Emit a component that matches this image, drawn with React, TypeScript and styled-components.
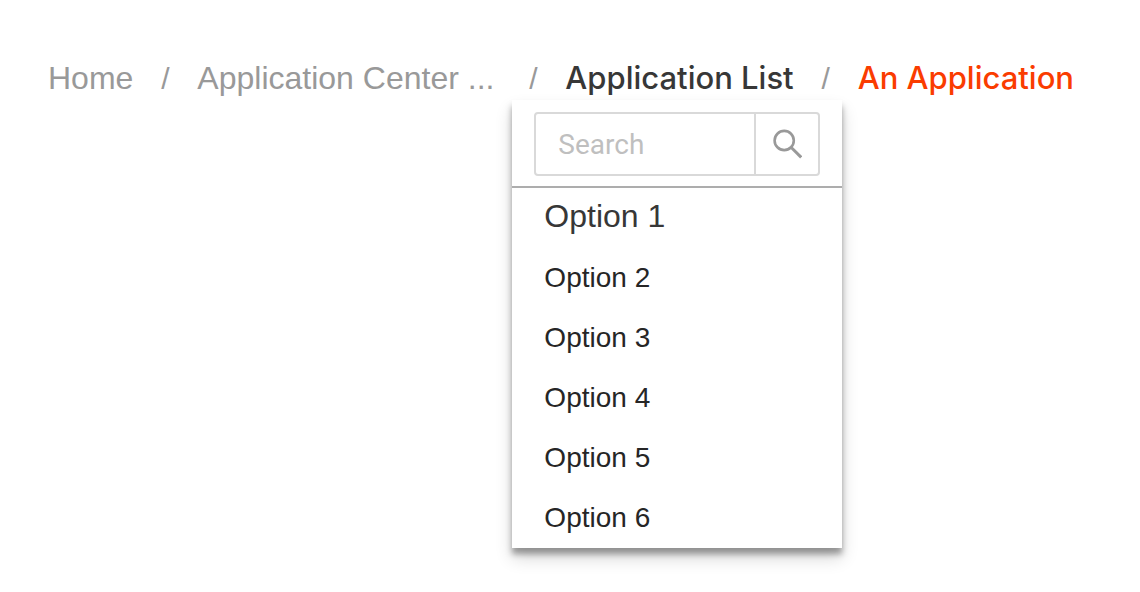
import React from 'react';
import styled, { createGlobalStyle } from 'styled-components';

const GlobalStyle = createGlobalStyle`
  *, *::before, *::after { box-sizing: border-box; }
  body {
    margin: 0;
    background: #fff;
    font-family: "Liberation Sans", Helvetica, Arial, sans-serif;
  }
`;

const Page = styled.main`
  min-height: 100vh;
  padding: 60px 48px;
`;

const Trail = styled.ol`
  display: flex;
  align-items: baseline;
  margin: 0;
  padding: 0;
  list-style: none;
`;

const Crumb = styled.li`
  position: relative;
  display: flex;
  align-items: baseline;
  line-height: 36px;
  white-space: nowrap;

  &:not(:last-child)::after {
    content: "/";
    width: 64px;
    color: #999;
    font-size: 30px;
    text-align: center;
  }
`;

const CrumbLink = styled.a<{ $wide?: boolean }>`
  min-width: ${(p) => (p.$wide ? '304px' : '0')};
  color: #999;
  font-size: 32px;
  text-decoration: none;
`;

const CurrentLink = styled(CrumbLink)`
  color: #fa3c00;
  font: 500 31px/36px Inter, Helvetica, Arial, sans-serif;
`;

const CrumbToggle = styled.button`
  padding: 0;
  border: 0;
  background: none;
  color: #373737;
  font: 500 31px/36px Inter, Helvetica, Arial, sans-serif;
  cursor: pointer;
`;

const Menu = styled.div`
  position: absolute;
  top: 40px;
  left: -53px;
  width: 330px;
  background: #fff;
  box-shadow: 0 6px 6px rgba(0, 0, 0, 0.34), 0 10px 16px rgba(0, 0, 0, 0.16);
`;

const SearchBar = styled.form`
  padding: 12px 22px 10px;
  border-bottom: 2px solid #adadad;
`;

const SearchField = styled.div`
  display: flex;
  height: 64px;
  border: 2px solid #d9d9d9;
  border-radius: 4px;
`;

const SearchInput = styled.input`
  flex: 1;
  min-width: 0;
  padding: 0 22px;
  border: 0;
  outline: 0;
  background: none;
  color: #373737;
  font: 28px Roboto, sans-serif;

  &::placeholder { color: #bfbfbf; opacity: 1; }
`;

const SearchButton = styled.button`
  display: flex;
  align-items: center;
  justify-content: center;
  width: 64px;
  padding: 0;
  border: 0;
  border-left: 2px solid #d9d9d9;
  background: none;
  color: #999;
  cursor: pointer;
`;

const Options = styled.ul`
  margin: 0;
  padding: 0;
  list-style: none;
`;

const Option = styled.a<{ $active?: boolean }>`
  display: block;
  padding: ${(p) => (p.$active ? '0 32px 4px' : '0 32px')};
  color: ${(p) => (p.$active ? '#373737' : '#262626')};
  font-size: ${(p) => (p.$active ? 32 : 28)}px;
  line-height: ${(p) => (p.$active ? 56 : 60)}px;
  text-decoration: none;
`;

const options = ['Option 1', 'Option 2', 'Option 3', 'Option 4', 'Option 5', 'Option 6'];

function SearchIcon() {
  return (
    <svg width="30" height="30" viewBox="0 0 30 30" fill="none" stroke="currentColor" aria-hidden="true">
      <circle cx="12.2" cy="11.5" r="9.6" strokeWidth="2.6" />
      <path d="M19 18.3L29.2 28.4" strokeWidth="3" />
    </svg>
  );
}

export default function App() {
  return (
    <>
      <GlobalStyle />
      <Page>
        <nav aria-label="Breadcrumb">
          <Trail>
            <Crumb><CrumbLink href="#home">Home</CrumbLink></Crumb>
            <Crumb><CrumbLink href="#center" $wide>Application Center ...</CrumbLink></Crumb>
            <Crumb>
              <CrumbToggle type="button" aria-expanded="true">Application List</CrumbToggle>
              <Menu>
                <SearchBar onSubmit={(e) => e.preventDefault()}>
                  <SearchField>
                    <SearchInput type="text" placeholder="Search" aria-label="Search" />
                    <SearchButton type="submit" aria-label="Submit search"><SearchIcon /></SearchButton>
                  </SearchField>
                </SearchBar>
                <Options>
                  {options.map((label, i) => (
                    <li key={label}><Option href="#option" $active={i === 0}>{label}</Option></li>
                  ))}
                </Options>
              </Menu>
            </Crumb>
            <Crumb><CurrentLink href="#application" aria-current="page">An Application</CurrentLink></Crumb>
          </Trail>
        </nav>
      </Page>
    </>
  );
}
